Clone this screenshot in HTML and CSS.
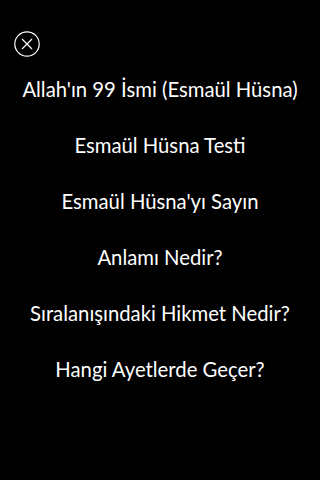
FILE: index.html
```html
<!DOCTYPE html>
<html lang="tr">
<head>
<meta charset="utf-8">
<link rel="stylesheet" href="styles.css">
</head>
<body>
<div class="screen">
  <div class="top">
    <button class="close" aria-label="Kapat">
      <svg width="26" height="26" viewBox="0 0 26 26">
        <circle cx="13" cy="13" r="12.2" fill="none" stroke="#fff" stroke-width="1.2"/>
        <path d="M8 8 L18 18 M18 8 L8 18" stroke="#fff" stroke-width="1.2" fill="none"/>
      </svg>
    </button>
  </div>
  <ul class="menu">
    <li>Allah'ın 99 İsmi (Esmaül Hüsna)</li>
    <li>Esmaül Hüsna Testi</li>
    <li>Esmaül Hüsna'yı Sayın</li>
    <li>Anlamı Nedir?</li>
    <li>Sıralanışındaki Hikmet Nedir?</li>
    <li>Hangi Ayetlerde Geçer?</li>
  </ul>
</div>
</body>
</html>
```
FILE: styles.css
```css
html, body {
  margin: 0;
  padding: 0;
  background: #000;
}
.screen {
  width: 320px;
  height: 480px;
  background: #000;
  color: #fff;
  font-family: "Lato", "Noto Sans", sans-serif;
  overflow: hidden;
}
.top {
  padding: 31px 0 0 14px;
  height: 30px;
}
.close {
  background: none;
  border: 0;
  padding: 0;
  width: 26px;
  height: 26px;
  display: block;
}
.close svg { display: block; }
.menu {
  list-style: none;
  margin: 0;
  padding: 0;
  display: flex;
  flex-direction: column;
}
.menu li {
  height: 56px;
  line-height: 56px;
  text-align: center;
  font-size: 20.3px;
  white-space: nowrap;
}
```
